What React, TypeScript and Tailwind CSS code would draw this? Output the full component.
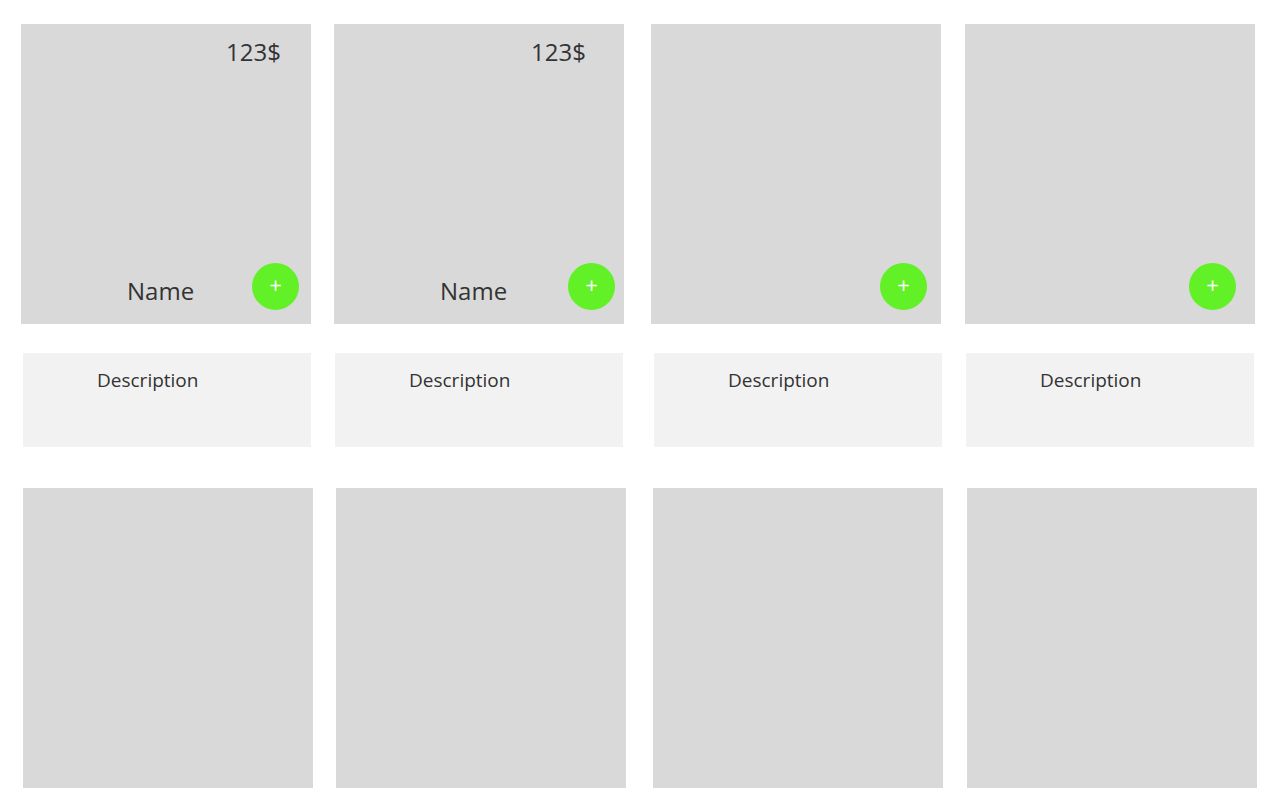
type Product = { price: string; name: string; priceInset: string; buttonInset: string };

const rows: Product[][] = [
  [
    { price: "123$", name: "Name", priceInset: "pr-[30px]", buttonInset: "pr-3" },
    { price: "123$", name: "Name", priceInset: "pr-[38px]", buttonInset: "pr-[9px]" },
  ],
  [
    { price: "", name: "", priceInset: "pr-[30px]", buttonInset: "pr-[14px]" },
    { price: "", name: "", priceInset: "pr-[30px]", buttonInset: "pr-[19px]" },
  ],
];

const pairGaps = ["gap-[23px]", "gap-6"];

function ProductCard({ product }: { product: Product }) {
  return (
    <article className="flex h-[300px] flex-col justify-between bg-[#d9d9d9] pt-3 pb-[14px]">
      <p className={`h-8 text-right text-2xl ${product.priceInset}`}>{product.price}</p>
      <div className={`flex items-center justify-between pl-[106px] ${product.buttonInset}`}>
        <h2 className="pt-2 text-2xl">{product.name}</h2>
        <button
          type="button"
          aria-label="Add"
          className="flex size-[47px] items-center justify-center rounded-full bg-[#62f027] pb-1 text-[22px] font-medium text-white"
        >
          +
        </button>
      </div>
    </article>
  );
}

export default function App() {
  return (
    <main className="min-h-screen bg-white pt-6 pb-3 font-['Open_Sans','Noto_Sans',sans-serif] text-[#333333]">
      <section className="grid grid-cols-[603fr_604fr] gap-[27px] pr-[25px] pl-[21px]">
        {rows.map((pair, i) => (
          <div key={i} className={`grid grid-cols-2 ${pairGaps[i]}`}>
            {pair.map((product, j) => (
              <ProductCard key={j} product={product} />
            ))}
          </div>
        ))}
      </section>
      <section className="mt-[29px] grid grid-cols-2 gap-[31px] pr-[26px] pl-[23px]">
        {rows.map((pair, i) => (
          <div key={i} className="grid grid-cols-2 gap-6">
            {pair.map((_, j) => (
              <div key={j} className="h-[94px] bg-[#f2f2f2] pt-[13px] pl-[74px]">
                <p className="text-[19px] leading-7">Description</p>
              </div>
            ))}
          </div>
        ))}
      </section>
      <section className="mt-[41px] grid grid-cols-[603fr_604fr] gap-[27px] px-[23px]">
        {rows.map((pair, i) => (
          <div key={i} className={`grid grid-cols-2 ${pairGaps[i]}`}>
            {pair.map((_, j) => (
              <div key={j} className="h-[300px] bg-[#d9d9d9]" />
            ))}
          </div>
        ))}
      </section>
    </main>
  );
}
